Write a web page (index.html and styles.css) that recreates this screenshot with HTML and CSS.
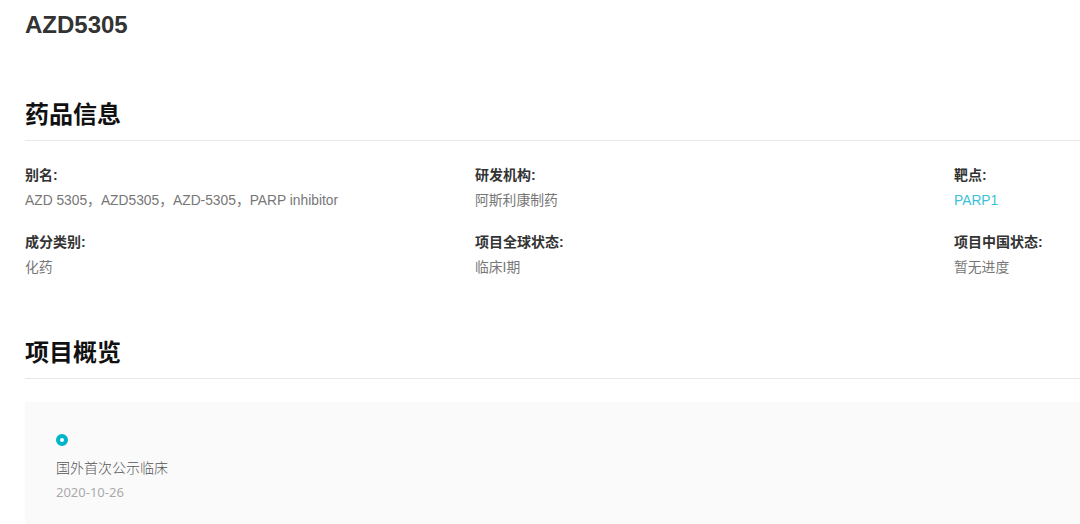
FILE: index.html
```html
<!DOCTYPE html>
<html lang="zh">
<head>
<meta charset="utf-8">
<link rel="stylesheet" href="styles.css">
</head>
<body>
<div class="page">
  <h1 class="title">AZD5305</h1>

  <section class="section">
    <h2 class="section-title">药品信息</h2>
    <div class="info-grid">
      <div class="info-item">
        <div class="label">别名:</div>
        <div class="value">AZD 5305，AZD5305，AZD-5305，PARP inhibitor</div>
      </div>
      <div class="info-item">
        <div class="label">研发机构:</div>
        <div class="value">阿斯利康制药</div>
      </div>
      <div class="info-item">
        <div class="label">靶点:</div>
        <div class="value link">PARP1</div>
      </div>
      <div class="info-item">
        <div class="label">成分类别:</div>
        <div class="value">化药</div>
      </div>
      <div class="info-item">
        <div class="label">项目全球状态:</div>
        <div class="value">临床I期</div>
      </div>
      <div class="info-item">
        <div class="label">项目中国状态:</div>
        <div class="value">暂无进度</div>
      </div>
    </div>
  </section>

  <section class="section">
    <h2 class="section-title">项目概览</h2>
    <div class="timeline">
      <div class="event">
        <span class="dot"></span>
        <div class="event-name">国外首次公示临床</div>
        <div class="event-date">2020-10-26</div>
      </div>
    </div>
  </section>
</div>
</body>
</html>
```

FILE: styles.css
```css
* { box-sizing: border-box; }
html, body { margin: 0; padding: 0; background: #fff; }
body {
  font-family: "Liberation Sans", Arial, "Noto Sans CJK SC", sans-serif;
  color: #333;
}
.page {
  padding: 10px 0 0 25px;
}
.title {
  margin: 0;
  font-size: 24px;
  line-height: 30px;
  font-weight: bold;
  color: #333;
}
.section {
  margin-top: 60px;
}
.section + .section {
  margin-top: 60px;
}
.section-title {
  margin: 0;
  font-size: 24px;
  line-height: 30px;
  font-weight: bold;
  color: #111;
  padding-bottom: 10px;
  border-bottom: 1px solid #e8e8e8;
}
.info-grid {
  display: grid;
  grid-template-columns: 450px 479px 1fr;
  row-gap: 21px;
  padding-top: 24px;
}
.label {
  font-size: 14px;
  line-height: 20px;
  font-weight: bold;
  color: #333;
}
.value {
  margin-top: 6px;
  font-size: 13.8px;
  line-height: 20px;
  color: #777;
}
.value.link { color: #3cbfd8; }

.timeline {
  margin-top: 23px;
  background: #fafafa;
  padding: 32px 31px 30px;
  min-height: 130px;
}
.event {
  display: flex;
  flex-direction: column;
  align-items: flex-start;
}
.dot {
  width: 12px;
  height: 12px;
  border-radius: 50%;
  border: 4px solid #00b4cc;
  background: #fff;
}
.event-name {
  margin-top: 11px;
  font-family: "Noto Sans CJK SC", sans-serif;
  font-weight: 300;
  font-size: 14px;
  line-height: 20px;
  color: #555;
}
.event-date {
  margin-top: 6px;
  font-family: "Noto Sans", "Noto Sans CJK SC", sans-serif;
  font-size: 13px;
  line-height: 18px;
  color: #aaa;
}
```
